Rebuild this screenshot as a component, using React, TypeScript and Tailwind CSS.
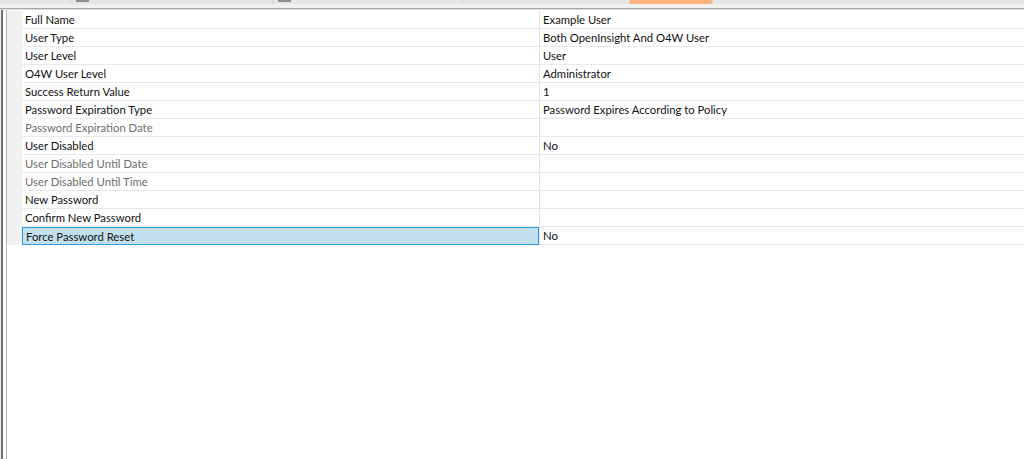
const rows: { label: string; value: string; disabled?: boolean; selected?: boolean }[] = [
  { label: 'Full Name', value: 'Example User' },
  { label: 'User Type', value: 'Both OpenInsight And O4W User' },
  { label: 'User Level', value: 'User' },
  { label: 'O4W User Level', value: 'Administrator' },
  { label: 'Success Return Value', value: '1' },
  { label: 'Password Expiration Type', value: 'Password Expires According to Policy' },
  { label: 'Password Expiration Date', value: '', disabled: true },
  { label: 'User Disabled', value: 'No' },
  { label: 'User Disabled Until Date', value: '', disabled: true },
  { label: 'User Disabled Until Time', value: '', disabled: true },
  { label: 'New Password', value: '' },
  { label: 'Confirm New Password', value: '' },
  { label: 'Force Password Reset', value: 'No', selected: true },
];

function Tab({ width, icon = true, active = false }: { width: string; icon?: boolean; active?: boolean }) {
  return (
    <div className={`${width} h-full flex items-start border-r border-[#d4d4d4] ${active ? 'bg-[#ffb27f]' : ''}`}>
      {icon && <div className="ml-[5px] w-[13px] h-[2px] bg-[#8c8c8c]" />}
    </div>
  );
}

export default function App() {
  return (
    <div
      className="w-[1024px] h-[459px] bg-white flex flex-col overflow-hidden text-[11.3px]"
      style={{ fontFamily: 'Lato, "Noto Sans", sans-serif' }}
    >
      <div className="h-[4px] flex bg-[#e6e6e6] shrink-0">
        <Tab width="w-[71px]" icon={false} />
        <Tab width="w-[202px]" />
        <Tab width="w-[190px]" />
        <Tab width="w-[167px]" icon={false} />
        <Tab width="w-[83px]" icon={false} active />
        <div className="flex-1" />
      </div>
      <div className="h-[4px] bg-[#f0f0f0] shrink-0" />
      <div className="h-[1px] bg-[#a3a9ad] shrink-0" />
      <div className="h-[1px] bg-[#d8dbdd] shrink-0" />

      <div className="flex flex-1">
        <div className="w-[1px] bg-[#f0f0f0]" />
        <div className="w-[2px] bg-[#6e6e6e]" />
        <div className="w-[3px] bg-white" />
        <div className="w-[1px] bg-[#b4b4b4]" />
        <div className="flex-1 flex flex-col pt-[1px]">
          {rows.map((r) => (
            <div key={r.label} className="flex h-[18px]">
              <div className="w-[15px] bg-[#f0f0f0]" />
              <div
                className={`w-[517px] flex items-center pl-[3px] pt-[1px] leading-none ${
                  r.selected
                    ? 'bg-[#c2dfee] border border-[#2b9be0] pl-[2px]'
                    : 'border-b border-[#e9e9e9]'
                } ${r.disabled ? 'text-[#6d6d6d]' : 'text-[#111111]'}`}
              >
                {r.label}
              </div>
              <div className="w-[1px] bg-[#e4e4e4]" />
              <div className="flex-1 flex items-center pl-[3px] pt-[1px] border-b border-[#e9e9e9] text-[#111111] leading-none">
                {r.value}
              </div>
            </div>
          ))}
        </div>
      </div>
    </div>
  );
}
